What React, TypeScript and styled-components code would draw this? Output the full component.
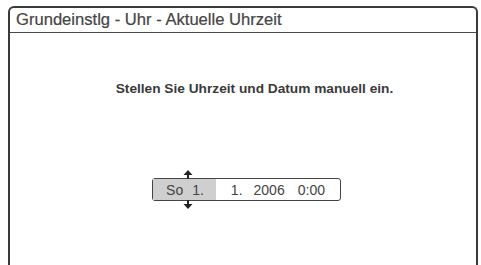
import styled, { createGlobalStyle } from "styled-components";

const GlobalStyle = createGlobalStyle`
  html, body {
    margin: 0;
    padding: 0;
    background: #fff;
    overflow: hidden;
  }
  body {
    font-family: "Liberation Sans", Arial, sans-serif;
    color: #3c3c3c;
  }
`;

const Screen = styled.div`
  width: 481px;
  height: 265px;
  padding: 6px 3px 0 8px;
  box-sizing: border-box;
`;

const Panel = styled.section`
  height: 270px;
  border: 2px solid #3a3a3a;
  border-bottom: none;
  border-radius: 6px 6px 0 0;
  display: flex;
  flex-direction: column;
`;

const TitleBar = styled.header`
  height: 24px;
  border-bottom: 1.5px solid #4a4a4a;
  display: flex;
  align-items: center;
  padding-left: 6px;
  font-size: 16.6px;
  color: #444;
  -webkit-text-stroke: 0.2px #444;
`;

const Body = styled.div`
  display: flex;
  flex-direction: column;
  align-items: center;
`;

const Message = styled.p<{ $shift: number }>`
  margin: 48px 0 0;
  padding-left: ${({ $shift }) => $shift}px;
  font-size: 13.7px;
  font-weight: bold;
  color: #3a3a3a;
`;

const FieldRow = styled.div<{ $shift: number }>`
  margin-top: 82px;
  padding-left: ${({ $shift }) => $shift}px;
  display: flex;
`;

const DateField = styled.div`
  display: flex;
  height: 21px;
  border: 1.5px solid #444;
  border-radius: 3px;
  font-size: 14px;
  color: #444;
`;

const Segment = styled.div<{ $active?: boolean; $pl: number; $pr: number }>`
  position: relative;
  display: flex;
  align-items: center;
  padding: 0 ${({ $pr }) => $pr}px 0 ${({ $pl }) => $pl}px;
  background: ${({ $active }) => ($active ? "#cfcfcf" : "transparent")};
`;

const Part = styled.span<{ $gap?: number }>`
  margin-left: ${({ $gap }) => $gap ?? 0}px;
`;

const Arrow = styled.svg<{ $down?: boolean }>`
  position: absolute;
  left: 30px;
  ${({ $down }) => ($down ? "bottom: -9px;" : "top: -9px;")}
`;

export default function App() {
  return (
    <>
      <GlobalStyle />
      <Screen>
        <Panel>
          <TitleBar>Grundeinstlg - Uhr - Aktuelle Uhrzeit</TitleBar>
          <Body>
            <Message $shift={23}>Stellen Sie Uhrzeit und Datum manuell ein.</Message>
            <FieldRow $shift={7}>
              <DateField>
                <Segment $active $pl={13} $pr={12}>
                  <Arrow width="10" height="9" viewBox="0 0 10 9">
                    <path d="M5 0 L9.5 5 L6 5 L6 9 L4 9 L4 5 L0.5 5 Z" fill="#222" />
                  </Arrow>
                  <Part>So</Part>
                  <Part $gap={9}>1.</Part>
                  <Arrow $down width="10" height="9" viewBox="0 0 10 9">
                    <path d="M4 0 L6 0 L6 4 L9.5 4 L5 9 L0.5 4 L4 4 Z" fill="#222" />
                  </Arrow>
                </Segment>
                <Segment $pl={15} $pr={15}>
                  <Part>1.</Part>
                  <Part $gap={11}>2006</Part>
                  <Part $gap={13}>0:00</Part>
                </Segment>
              </DateField>
            </FieldRow>
          </Body>
        </Panel>
      </Screen>
    </>
  );
}
